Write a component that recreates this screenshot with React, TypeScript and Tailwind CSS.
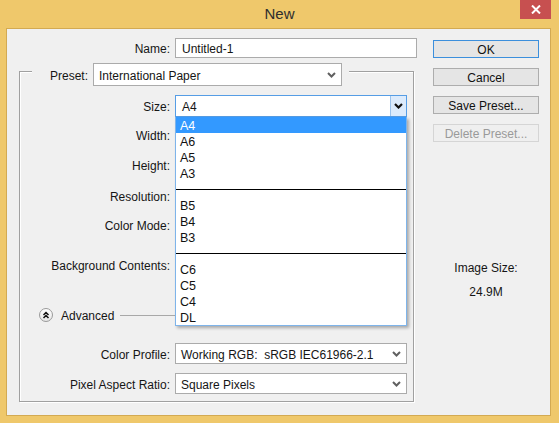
import React from "react";

const Chevron = ({ color = "#606060", w = 2 }: { color?: string; w?: number }) => (
  <svg width="9" height="6" viewBox="0 0 9 6" className="block">
    <path d="M1 1 L4.5 4.5 L8 1" fill="none" stroke={color} strokeWidth={w} />
  </svg>
);

const Select = ({ value, w, h }: { value: string; w: string; h: string }) => (
  <div className={`${w} ${h} bg-white border border-[#ABABAB] flex items-center justify-between pl-[5px] pr-[5px]`}>
    <span className="whitespace-pre pt-[2px]">{value}</span>
    <Chevron />
  </div>
);

const Label = ({ children }: { children: React.ReactNode }) => (
  <div className="w-[150px] text-right whitespace-nowrap pt-[2px]">{children}</div>
);

const Btn = ({ children, primary, disabled }: { children: React.ReactNode; primary?: boolean; disabled?: boolean }) => (
  <div
    className={`h-[18px] w-[106px] flex items-center justify-center border pt-[1px] ${
      primary
        ? "border-[#3C8FDC] bg-[#E5E5E5] text-[#111]"
        : disabled
        ? "border-[#D5D5D5] bg-[#EFEFEF] text-[#9A9A9A]"
        : "border-[#ADADAD] bg-[#E5E5E5] text-[#111]"
    }`}
  >
    {children}
  </div>
);

const items: (string | null)[] = ["A4", "A6", "A5", "A3", null, "B5", "B4", "B3", null, "C6", "C5", "C4", "DL"];

export default function App() {
  return (
    <div
      className="w-[559px] h-[423px] bg-[#EFC86B] text-[12px] leading-[14px] text-[#151515] overflow-hidden"
      style={{ fontFamily: '"Liberation Sans", Arial, sans-serif' }}
    >
      {/* Title bar */}
      <div className="relative h-[28px] flex items-center justify-center">
        <span className="text-[15px] text-[#2E2E2E] pb-[1px]">New</span>
        <div className="absolute top-0 right-[8px] w-[31px] h-[19px] bg-[#C75050] flex items-center justify-center">
          <svg width="10" height="9" viewBox="0 0 10 9">
            <path d="M1 0.5 L9 8.5 M9 0.5 L1 8.5" stroke="white" strokeWidth="2" />
          </svg>
        </div>
      </div>

      {/* Body */}
      <div className="ml-[6px] w-[545px] h-[388px] border border-[#D3AA52] bg-[#F0F0F0] flex">
        {/* Left column */}
        <div className="w-[410px] flex flex-col">
          <div className="mt-[9px] h-[20px] flex items-center">
            <div className="w-[163px] text-right pt-[2px]">Name:</div>
            <div className="ml-[5px] w-[242px] h-[20px] bg-white border border-[#ABABAB] flex items-center pl-[6px] pt-[2px]">
              Untitled-1
            </div>
          </div>

          {/* Group box */}
          <div className="relative mt-[13px] ml-[12px] w-[395px] h-[331px] border border-[#A0A0A0] shadow-[inset_1px_1px_0_#fff,1px_1px_0_#fff] flex flex-col">
            {/* Legend */}
            <div className="absolute left-[12px] top-[-9px] bg-[#F0F0F0] pl-[18px] pr-[7px] flex items-center">
              <span className="pt-[2px]">Preset:</span>
              <div className="ml-[5px]">
                <Select value="International Paper" w="w-[249px]" h="h-[23px]" />
              </div>
            </div>

            {/* Size */}
            <div className="mt-[23px] h-[22px] flex items-center relative z-10">
              <Label>Size:</Label>
              <div className="ml-[5px] w-[232px] h-[22px] relative">
                <div className="w-full h-full bg-white border border-[#569DE5] flex items-center justify-between">
                  <span className="pl-[6px] pt-[2px]">A4</span>
                  <div className="w-[16px] h-full bg-[#DCEBFC] border-l border-[#9CC3EC] flex items-center justify-center">
                    <Chevron color="#111" w={2.2} />
                  </div>
                </div>
                {/* Dropdown list */}
                <div className="absolute left-0 top-full w-[232px] bg-white border-x border-b border-[#7EB4EA] shadow-[2px_2px_3px_rgba(0,0,0,0.3)] flex flex-col">
                  {items.map((it, i) =>
                    it === null ? (
                      <div key={i} className="h-[16px] flex items-center">
                        <div className="w-full h-[1px] bg-black" />
                      </div>
                    ) : (
                      <div
                        key={i}
                        className={`h-[16px] flex items-center pl-[4px] pt-[2px] text-[12.5px] ${
                          i === 0 ? "bg-[#3399FF] text-white" : "text-[#111]"
                        }`}
                      >
                        {it}
                      </div>
                    )
                  )}
                </div>
              </div>
            </div>

            <div className="mt-[7px] h-[22px] flex items-center"><Label>Width:</Label></div>
            <div className="mt-[8px] h-[22px] flex items-center"><Label>Height:</Label></div>
            <div className="mt-[9px] h-[22px] flex items-center"><Label>Resolution:</Label></div>
            <div className="mt-[7px] h-[22px] flex items-center"><Label>Color Mode:</Label></div>
            <div className="mt-[18px] h-[22px] flex items-center"><Label>Background Contents:</Label></div>

            {/* Advanced */}
            <div className="mt-[28px] h-[22px] flex items-center pl-[19px] pr-[6px]">
              <div className="w-[14px] h-[14px] rounded-full border border-[#9A9A9A] bg-gradient-to-b from-white to-[#E6E6E6] flex items-center justify-center">
                <svg width="8" height="8" viewBox="0 0 8 8">
                  <path d="M1.5 4 L4 1.5 L6.5 4 M1.5 7 L4 4.5 L6.5 7" fill="none" stroke="#111" strokeWidth="1.5" />
                </svg>
              </div>
              <span className="ml-[8px] pt-[2px]">Advanced</span>
              <div className="ml-[6px] flex-1 h-[1px] bg-[#A8A8A8]" />
            </div>

            <div className="mt-[17px] h-[21px] flex items-center">
              <Label>Color Profile:</Label>
              <div className="ml-[5px]">
                <Select value="Working RGB:  sRGB IEC61966-2.1" w="w-[232px]" h="h-[21px]" />
              </div>
            </div>
            <div className="mt-[9px] h-[21px] flex items-center">
              <Label>Pixel Aspect Ratio:</Label>
              <div className="ml-[5px]">
                <Select value="Square Pixels" w="w-[232px]" h="h-[21px]" />
              </div>
            </div>
          </div>
        </div>

        {/* Right column */}
        <div className="ml-[16px] w-[106px] flex flex-col">
          <div className="mt-[11px] flex flex-col gap-[10px]">
            <Btn primary>OK</Btn>
            <Btn>Cancel</Btn>
            <Btn>Save Preset...</Btn>
            <Btn disabled>Delete Preset...</Btn>
          </div>
          <div className="mt-[119px] text-center">Image Size:</div>
          <div className="mt-[10px] text-center">24.9M</div>
        </div>
      </div>
    </div>
  );
}
